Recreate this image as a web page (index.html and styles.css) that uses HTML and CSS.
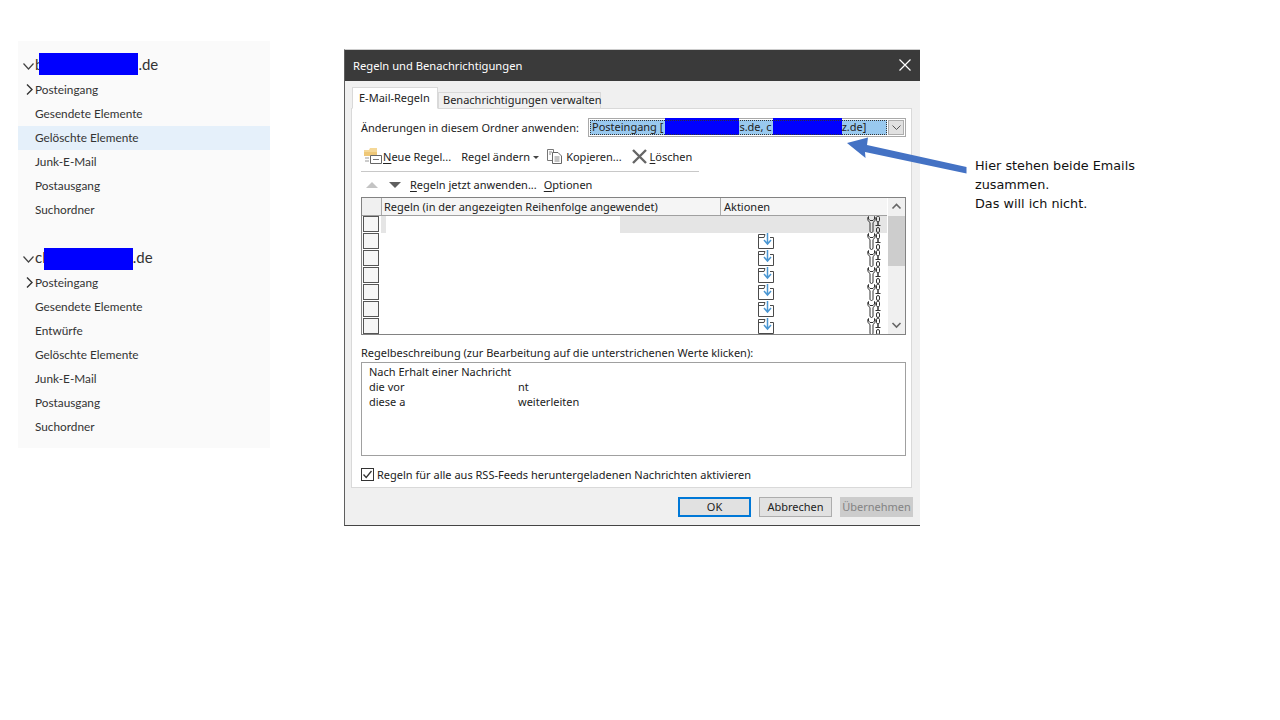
FILE: index.html
```html
<!DOCTYPE html>
<html>
<head>
    <title>Regeln und Benachrichtigungen</title>
    <link rel="stylesheet" href="styles.css">
</head>
<body>
    <svg class="defs" width="0" height="0">
        <symbol id="move" viewBox="0 0 16 16">
            <path d="M7 1.500H.5V15.500H15.500V4.500H12" fill="none" stroke="#4a4a4a"/>
            <path d="M.5 4.500H6L7 1.500" fill="none" stroke="#4a4a4a"/>
            <path d="M9.500 0V10M6 7L9.500 11L13 7" fill="none" stroke="#4a96d2" stroke-width="1.500"/>
        </symbol>
        <symbol id="tools" viewBox="0 0 14 17">
            <path d="M1.500 .5C0 2 .5 5 3 6.500V15C3 17 6 17 6 15V6.500C8.500 5 9 2 7.500 .5V3L6 4.500H3L1.500 3Z" fill="none" stroke="#333"/>
            <rect x="9.500" y=".5" width="3" height="5" rx="1" fill="none" stroke="#333"/>
            <path d="M11 5.500V9" stroke="#333" stroke-width="1.500"/>
            <path d="M8.500 9.500H13.500" stroke="#333"/>
            <rect x="9.500" y="11.500" width="3" height="5" rx="1.500" fill="none" stroke="#333"/>
        </symbol>
    </svg>

    <nav class="folders">
        <div class="account">
            <svg class="twist-open" width="11" height="7" viewBox="0 0 11 7"><path d="M.5 .5L5.500 6L10.500 .5" fill="none" stroke="#444" stroke-width="1.200"/></svg>
            <span>b<span class="redact redact-a"></span>.de</span>
        </div>
        <div class="folder"><svg class="twist" width="7" height="11" viewBox="0 0 7 11"><path d="M1 .5L6 5.500L1 10.500" fill="none" stroke="#333" stroke-width="1.400"/></svg>Posteingang</div>
        <div class="folder">Gesendete Elemente</div>
        <div class="folder selected">Gelöschte Elemente</div>
        <div class="folder">Junk-E-Mail</div>
        <div class="folder">Postausgang</div>
        <div class="folder">Suchordner</div>

        <div class="account second">
            <svg class="twist-open" width="11" height="7" viewBox="0 0 11 7"><path d="M.5 .5L5.500 6L10.500 .5" fill="none" stroke="#444" stroke-width="1.200"/></svg>
            <span>cl<span class="redact redact-b"></span>.de</span>
        </div>
        <div class="folder"><svg class="twist" width="7" height="11" viewBox="0 0 7 11"><path d="M1 .5L6 5.500L1 10.500" fill="none" stroke="#333" stroke-width="1.400"/></svg>Posteingang</div>
        <div class="folder">Gesendete Elemente</div>
        <div class="folder">Entwürfe</div>
        <div class="folder">Gelöschte Elemente</div>
        <div class="folder">Junk-E-Mail</div>
        <div class="folder">Postausgang</div>
        <div class="folder">Suchordner</div>
    </nav>

    <div class="dialog">
        <div class="titlebar">
            <span>Regeln und Benachrichtigungen</span>
            <svg width="12" height="12" viewBox="0 0 12 12"><path d="M.5 .5L11.500 11.500M11.500 .5L.5 11.500" stroke="#fff" stroke-width="1.200"/></svg>
        </div>
        <div class="dialog-body">
            <div class="tabs">
                <div class="tab active">E-Mail-Regeln</div>
                <div class="tab">Benachrichtigungen verwalten</div>
            </div>
            <div class="panel">
                <div class="folder-row">
                    <span class="folder-label">Änderungen in diesem Ordner anwenden:</span>
                    <div class="combo">
                        <div class="combo-value">Posteingang [<span class="redact redact-c"></span>s.de, c<span class="redact redact-d"></span>z.de]</div>
                        <div class="combo-btn"><svg width="9" height="5" viewBox="0 0 9 5"><path d="M.5 .5L4.500 4.500L8.500 .5" fill="none" stroke="#555"/></svg></div>
                    </div>
                </div>

                <div class="toolbar first">
                    <svg class="ico-new" width="18" height="16" viewBox="0 0 18 16">
                        <path d="M0 2H5L6 0H13V7H0Z" fill="#f5d898"/>
                        <path d="M0 4H13V8H0Z" fill="#efc878"/>
                        <path d="M6.500 7.500H17.500V15.500H6.500Z" fill="#fff" stroke="#666"/>
                        <path d="M9 11.500H15" stroke="#777"/>
                        <path d="M1 10H5M1 13H5" stroke="#999"/>
                    </svg>
                    <span class="tool"><u>N</u>eue Regel...</span>
                    <span class="tool tool-edit">Re<u>g</u>el ändern<i class="caret"></i></span>
                    <svg class="ico-copy" width="15" height="15" viewBox="0 0 15 15">
                        <path d="M.5 .5H6.500V11.500H.5Z" fill="#fff" stroke="#777"/>
                        <path d="M5.500 3.500H11L14.500 7V14.500H5.500Z" fill="#fff" stroke="#666"/>
                        <path d="M7.500 8H12.500M7.500 10H12.500M7.500 12H12.500M2 3H5M2 5H4" stroke="#888"/>
                    </svg>
                    <span class="tool">Kop<u>i</u>eren...</span>
                    <svg class="ico-del" width="15" height="15" viewBox="0 0 15 15"><path d="M1 1L14 14M14 1L1 14" stroke="#666" stroke-width="2.400"/></svg>
                    <span class="tool"><u>L</u>öschen</span>
                </div>
                <div class="toolbar second">
                    <i class="arrow-up"></i>
                    <i class="arrow-down"></i>
                    <span class="tool"><u>R</u>egeln jetzt anwenden...</span>
                    <span class="tool tool-options"><u>O</u>ptionen</span>
                </div>

                <div class="list">
                    <div class="list-main">
                        <div class="list-head">
                            <div class="head-check"></div>
                            <div class="head-name">Regeln (in der angezeigten Reihenfolge angewendet)</div>
                            <div class="head-action">Aktionen</div>
                        </div>
                        <div class="rule selected">
                            <span class="box"></span>
                            <div class="rule-name"><span class="mask"></span></div>
                            <span class="no-move"></span>
                            <svg class="tools"><use href="#tools"/></svg>
                        </div>
                        <div class="rule">
                            <span class="box"></span><div class="rule-name"></div>
                            <svg class="move"><use href="#move"/></svg>
                            <svg class="tools"><use href="#tools"/></svg>
                        </div>
                        <div class="rule">
                            <span class="box"></span><div class="rule-name"></div>
                            <svg class="move"><use href="#move"/></svg>
                            <svg class="tools"><use href="#tools"/></svg>
                        </div>
                        <div class="rule">
                            <span class="box"></span><div class="rule-name"></div>
                            <svg class="move"><use href="#move"/></svg>
                            <svg class="tools"><use href="#tools"/></svg>
                        </div>
                        <div class="rule">
                            <span class="box"></span><div class="rule-name"></div>
                            <svg class="move"><use href="#move"/></svg>
                            <svg class="tools"><use href="#tools"/></svg>
                        </div>
                        <div class="rule">
                            <span class="box"></span><div class="rule-name"></div>
                            <svg class="move"><use href="#move"/></svg>
                            <svg class="tools"><use href="#tools"/></svg>
                        </div>
                        <div class="rule">
                            <span class="box"></span><div class="rule-name"></div>
                            <svg class="move"><use href="#move"/></svg>
                            <svg class="tools"><use href="#tools"/></svg>
                        </div>
                    </div>
                    <div class="scrollbar">
                        <svg class="scroll-btn" width="17" height="18" viewBox="0 0 17 18"><path d="M4.500 10.500L8.500 6.500L12.500 10.500" fill="none" stroke="#666" stroke-width="1.600"/></svg>
                        <div class="thumb"></div>
                        <svg class="scroll-btn bottom" width="17" height="18" viewBox="0 0 17 18"><path d="M4.500 7L8.500 11L12.500 7" fill="none" stroke="#666" stroke-width="1.600"/></svg>
                    </div>
                </div>

                <div class="desc-label">Regelbeschreibung (zur Bearbeitung auf die unterstrichenen Werte klicken):</div>
                <div class="desc">
                    <div>Nach Erhalt einer Nachricht</div>
                    <div class="desc-line"><span class="cut">die vor</span>nt</div>
                    <div class="desc-line"><span class="cut">diese a</span>weiterleiten</div>
                </div>
                <div class="rss">
                    <svg class="rss-box" width="13" height="13" viewBox="0 0 13 13">
                        <rect x=".5" y=".5" width="12" height="12" fill="#fff" stroke="#333"/>
                        <path d="M2.500 6.500L5.200 9.500L10.500 3" fill="none" stroke="#333" stroke-width="1.300"/>
                    </svg>
                    <span>Regeln für alle aus RSS-Feeds heruntergeladenen Nachrichten aktivieren</span>
                </div>
            </div>
            <div class="buttons">
                <div class="btn default">OK</div>
                <div class="btn">Abbrechen</div>
                <div class="btn disabled">Übernehmen</div>
            </div>
        </div>
    </div>

    <div class="note">
        Hier stehen beide Emails<br>
        zusammen.<br>
        Das will ich nicht.
    </div>

    <svg class="callout" width="124" height="44" viewBox="0 0 124 44">
        <path d="M2 11L23 5.500L22 13L121.500 35L121.500 41.500L20 20L20.500 26Z" fill="#4472c4"/>
    </svg>
</body>
</html>
```

FILE: styles.css
```css
html, body {
    height: 100%;
}
body {
    margin: 0;
    background: #fff;
    color: #222;
    font-family: "Noto Sans", sans-serif;
    font-size: 11px;
    display: flex;
    align-items: flex-start;
    position: relative;
    overflow: hidden;
}
.defs {
    position: absolute;
}
u {
    text-underline-offset: 2px;
}
.redact {
    display: inline-block;
    background: #00f;
    vertical-align: middle;
}
.redact-a {
    width: 99px;
    height: 22px;
    margin-left: -4px;
    position: relative;
    top: -2px;
}
.redact-b {
    width: 89px;
    height: 22px;
    margin-left: -2px;
}
.redact-c {
    width: 74px;
    height: 17px;
    margin-left: 2px;
}
.redact-d {
    width: 69px;
    height: 17px;
    margin-left: 1px;
}

/* folder tree */
.folders {
    width: 252px;
    margin: 41px 0 0 18px;
    padding: 13px 0 9px;
    background: #fafafa;
    color: #333;
    font-family: Lato, sans-serif;
    font-size: 11.800px;
}
.account {
    height: 24px;
    display: flex;
    align-items: center;
    padding-left: 5px;
    font-size: 15px;
    white-space: nowrap;
}
.account.second {
    margin-top: 25px;
}
.twist-open {
    margin-right: 1px;
}
.folder {
    height: 24px;
    line-height: 24px;
    padding-left: 17px;
    position: relative;
}
.folder.selected {
    background: #e5f0fa;
}
.twist {
    margin: 0 2px 0 -9px;
    vertical-align: -1px;
}

/* dialog */
.dialog {
    width: 575px;
    height: 475px;
    margin: 49px 0 0 74px;
    border-top: 1px solid #ccc;
    border-left: 1px solid #5f5f5f;
    border-bottom: 1px solid #444;
    background: #f0f0f0;
    display: flex;
    flex-direction: column;
}
.titlebar {
    height: 31px;
    box-sizing: border-box;
    flex: none;
    background: #3a3a3a;
    color: #fff;
    font-size: 11.200px;
    display: flex;
    align-items: center;
    justify-content: space-between;
    padding: 0 9px 1px 8px;
}
.dialog-body {
    flex: 1;
    padding: 0 8px 0 6px;
}
.tabs {
    display: flex;
    align-items: flex-end;
    height: 28px;
    padding-left: 1px;
    margin-bottom: -1px;
    position: relative;
}
.tab {
    height: 16px;
    line-height: 13px;
    padding: 0 4px;
    width: 153px;
    border: 1px solid #d9d9d9;
    border-bottom: 0;
    white-space: nowrap;
}
.tab.active {
    width: 78px;
    height: 20px;
    line-height: 19px;
    padding: 0 0 0 6px;
    background: #fff;
    position: relative;
    border-bottom: 1px solid #fff;
}
.panel {
    height: 380px;
    box-sizing: border-box;
    border: 1px solid #d9d9d9;
    background: #fff;
    padding: 9px 5px 0 9px;
}
.folder-row {
    display: flex;
    align-items: center;
    height: 19px;
}
.folder-label {
    width: 227px;
    white-space: nowrap;
}
.combo {
    flex: 1;
    height: 19px;
    box-sizing: border-box;
    border: 1px solid #a9a9a9;
    padding: 1px;
    display: flex;
    gap: 1px;
}
.combo-value {
    flex: 1;
    background: #99c9ef;
    outline: 1px dotted #333;
    outline-offset: -1px;
    line-height: 13px;
    padding-left: 2px;
    white-space: nowrap;
}
.combo-value .redact {
    vertical-align: top;
    margin-top: -2px;
}
.combo-btn {
    width: 16px;
    background: #e1e1e1;
    border: 1px solid #adadad;
    box-sizing: border-box;
    display: flex;
    align-items: center;
    justify-content: center;
}
.toolbar {
    display: flex;
    align-items: center;
    white-space: nowrap;
}
.toolbar.first {
    width: 338px;
    height: 22px;
    padding-bottom: 4px;
    margin-top: 8px;
    border-bottom: 1px solid #c8c8c8;
}
.toolbar.second {
    height: 25px;
}
.ico-new {
    margin: 0 1px 0 3px;
}
.tool-edit {
    margin-left: 10px;
}
.caret {
    display: inline-block;
    margin-left: 3px;
    vertical-align: 2px;
    border: 3px solid transparent;
    border-top: 3px solid #444;
    border-bottom: 0;
}
.ico-copy {
    margin: 0 4px 0 8px;
}
.ico-del {
    margin: 0 3px 0 10px;
}
.arrow-up, .arrow-down {
    border: 6px solid transparent;
    border-top: 0;
    border-bottom: 6px solid #c4c4c4;
    margin-left: 5px;
}
.arrow-down {
    border-bottom: 0;
    border-top: 6px solid #5f5f5f;
    margin: 0 9px 0 11px;
}
.tool-options {
    margin-left: 7px;
}

/* rule list */
.list {
    display: flex;
    height: 138px;
    box-sizing: border-box;
    border: 1px solid #828282;
}
.list-main {
    flex: 1;
    overflow: hidden;
}
.list-head {
    display: flex;
    height: 18px;
    box-sizing: border-box;
    border-bottom: 1px solid #a0a0a0;
    background: #f5f5f5;
    line-height: 17px;
    white-space: nowrap;
}
.head-check {
    width: 19px;
    background: #f0f0f0;
}
.head-name {
    width: 336px;
    padding-left: 2px;
    border-left: 1px solid #aaa;
}
.head-action {
    padding-left: 3px;
    border-left: 1px solid #aaa;
}
.rule {
    display: flex;
    height: 17px;
}
.rule.selected {
    background: linear-gradient(to right, #fff 19px, #e5e5e5 19px);
}
.box {
    width: 14px;
    height: 14px;
    margin: 0 3px 0 1px;
    flex: none;
    border: 1px solid #555;
    background: #f6f6f6;
}
.rule-name {
    width: 376px;
    flex: none;
}
.mask {
    display: block;
    width: 234px;
    height: 17px;
    margin-left: 4px;
    background: #fff;
}
.move {
    width: 16px;
    height: 16px;
    flex: none;
}
.no-move {
    width: 16px;
    flex: none;
}
.tools {
    width: 14px;
    height: 17px;
    flex: none;
    margin-left: 93px;
}
.scrollbar {
    width: 17px;
    background: #f0f0f0;
    border-left: 1px solid #fff;
    display: flex;
    flex-direction: column;
}
.scroll-btn {
    flex: none;
}
.thumb {
    height: 50px;
    background: #cdcdcd;
}
.scroll-btn.bottom {
    margin-top: auto;
}

/* description */
.desc-label {
    margin-top: 10px;
    height: 17px;
    line-height: 15px;
    white-space: nowrap;
}
.desc {
    height: 94px;
    box-sizing: border-box;
    border: 1px solid #a0a0a0;
    padding: 1px 7px;
    line-height: 15px;
    white-space: nowrap;
}
.desc-line {
    display: flex;
}
.cut {
    width: 149px;
    flex: none;
}
.rss {
    display: flex;
    align-items: center;
    gap: 3px;
    height: 16px;
    margin-top: 10px;
    white-space: nowrap;
}

/* buttons */
.buttons {
    display: flex;
    justify-content: flex-end;
    gap: 8px;
    padding-top: 9px;
    margin-right: -1px;
}
.btn {
    width: 73px;
    height: 20px;
    box-sizing: border-box;
    border: 1px solid #adadad;
    background: #e1e1e1;
    text-align: center;
    line-height: 18px;
}
.btn.default {
    border: 2px solid #0078d7;
    line-height: 16px;
}
.btn.disabled {
    background: #ccc;
    border-color: #ccc;
    color: #838383;
}

/* annotation */
.note {
    margin: 156px 0 0 55px;
    font-family: "DejaVu Sans", sans-serif;
    font-size: 12.800px;
    line-height: 19px;
    color: #111;
    white-space: nowrap;
}
.callout {
    position: absolute;
    left: 845px;
    top: 132px;
}
```
